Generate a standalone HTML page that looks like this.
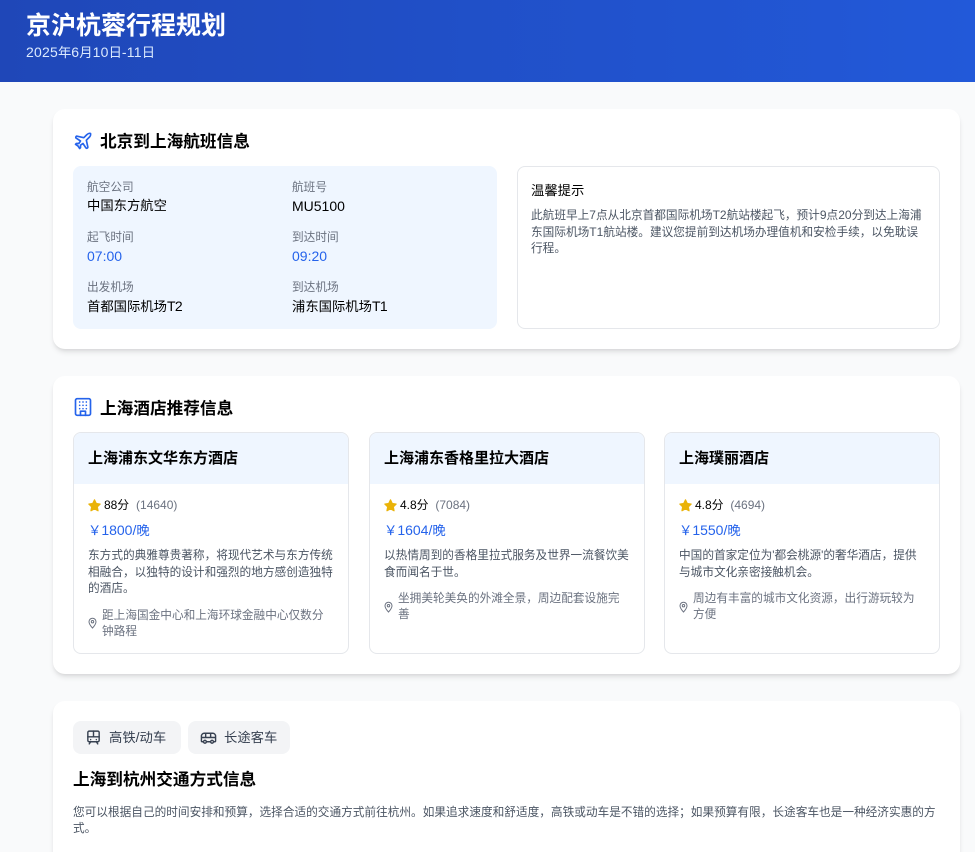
<!DOCTYPE html>
<html lang="zh-CN">
<head>
<meta charset="utf-8">
<title>京沪杭蓉行程规划</title>
<style>
*{box-sizing:border-box;margin:0;padding:0}
html,body{width:975px;height:852px;overflow:hidden}
body{position:relative;background:#f9fafb;font-family:"Liberation Sans","Noto Sans CJK SC",sans-serif;color:#000}
.a{position:absolute;white-space:nowrap}
.hd{position:absolute;left:0;top:0;width:975px;height:82px;background:linear-gradient(90deg,#1f47b8,#2259d9)}
.card{position:absolute;left:53px;width:907px;background:#fff;border-radius:12px;box-shadow:0 4px 6px -1px rgba(0,0,0,.1),0 2px 4px -2px rgba(0,0,0,.1)}
.t18{font-size:16.67px;font-weight:700;line-height:24px}
.lb{font-size:11.67px;line-height:16px;color:#6b7280}
.v{font-size:13.33px;line-height:20px}
.L{font-size:14px}
.S{font-size:12px}
.T{font-size:14px;letter-spacing:-.6px}
.blue{color:#2563eb}
.box{position:absolute;border:1px solid #e5e7eb;border-radius:8px;background:#fff}
.hc{position:absolute;top:432px;width:276px;height:222px;border:1px solid #e5e7eb;border-radius:8px;background:#fff;overflow:hidden}
.hc .h{position:absolute;left:0;top:0;width:100%;height:51px;background:#eff6ff}
.hc .n{position:absolute;left:14px;top:15px;font-size:15px;font-weight:700;line-height:21px;white-space:nowrap}
.hc .s{position:absolute;left:14px;top:64px;font-size:11.67px;line-height:16px;white-space:nowrap}
.hc .s svg{position:absolute;left:-1px;top:1px}
.hc .s b{font-weight:400;margin-left:16px}
.hc .s i{font-style:normal;color:#6b7280;margin-left:7px}
.hc .p{position:absolute;left:14px;top:87px;font-size:13.33px;line-height:20px;color:#2563eb;white-space:nowrap}
.hc .d{position:absolute;left:14px;top:115px;width:256px;font-size:11.67px;line-height:16.5px;color:#4b5563;white-space:nowrap}
.hc .l{position:absolute;left:28px;width:240px;font-size:11.67px;line-height:16px;color:#6b7280;white-space:nowrap}
.hc .pin{position:absolute;left:14px}
.tab{position:absolute;top:721px;height:33px;background:#f3f4f6;border-radius:8px;font-size:13.33px;line-height:33px;color:#374151}
</style>
</head>
<body>
<div class="hd"></div>
<div class="a" style="left:26px;top:8px;font-size:25px;font-weight:700;line-height:36px;color:#fff">京沪杭蓉行程规划</div>
<div class="a" style="left:26px;top:42px;font-size:13.33px;line-height:20px;color:#dbeafe"><span class="L" style="letter-spacing:.2px">2025</span>年<span class="L" style="letter-spacing:.2px">6</span>月<span class="L" style="letter-spacing:.2px">10</span>日<span class="L" style="letter-spacing:.2px">-11</span>日</div>

<div class="card" style="top:109px;height:240px"></div>
<svg class="a" style="left:73px;top:131px" width="20" height="20" viewBox="0 0 24 24" fill="none" stroke="#2563eb" stroke-width="2" stroke-linejoin="round" stroke-linecap="round"><path d="M17.800 19.200 16 11l3.500-3.500C21 6 21.500 4 21 3c-1-.5-3 0-4.500 1.500L13 8 4.800 6.200c-.5-.1-.9.1-1.100.500l-.3.500c-.2.500-.1 1 .3 1.300L9 12l-2 3H4l-1 1 3 2 2 3 1-1v-3l3-2 3.500 5.300c.3.400.8.500 1.300.300l.5-.2c.4-.3.600-.7.500-1.200z"/></svg>
<div class="a t18" style="left:100px;top:130px">北京到上海航班信息</div>

<div class="a" style="left:73px;top:166px;width:424px;height:163px;background:#eff6ff;border-radius:8px"></div>
<div class="a lb" style="left:87px;top:180px">航空公司</div>
<div class="a v" style="left:87px;top:196px">中国东方航空</div>
<div class="a lb" style="left:292px;top:180px">航班号</div>
<div class="a v" style="left:292px;top:196px"><span class="L">MU5100</span></div>
<div class="a lb" style="left:87px;top:230px">起飞时间</div>
<div class="a v blue" style="left:87px;top:246px"><span class="L">07:00</span></div>
<div class="a lb" style="left:292px;top:230px">到达时间</div>
<div class="a v blue" style="left:292px;top:246px"><span class="L">09:20</span></div>
<div class="a lb" style="left:87px;top:280px">出发机场</div>
<div class="a v" style="left:87px;top:296px">首都国际机场<span class="T">T2</span></div>
<div class="a lb" style="left:292px;top:280px">到达机场</div>
<div class="a v" style="left:292px;top:296px">浦东国际机场<span class="T">T1</span></div>

<div class="box" style="left:517px;top:166px;width:423px;height:163px"></div>
<div class="a" style="left:531px;top:181px;font-size:13.33px;line-height:20px">温馨提示</div>
<div class="a" style="left:531px;top:207px;width:400px;font-size:11.67px;line-height:16px;color:#4b5563">此航班早上<span class="S">7</span>点从北京首都国际机场<span class="S">T2</span>航站楼起飞，预计<span class="S">9</span>点<span class="S">20</span>分到达上海浦<br>东国际机场<span class="S">T1</span>航站楼。建议您提前到达机场办理值机和安检手续，以免耽误<br>行程。</div>

<div class="card" style="top:376px;height:298px"></div>
<svg class="a" style="left:73px;top:397px" width="20" height="20" viewBox="0 0 24 24" fill="none" stroke="#2563eb" stroke-width="2" stroke-linejoin="round" stroke-linecap="round"><rect x="3" y="2" width="18" height="20" rx="2"/><path d="M9 22v-5h6v5M8 6h.01M12 6h.01M16 6h.01M8 10h.01M12 10h.01M16 10h.01M8 14h.01M12 14h.01M16 14h.01"/></svg>
<div class="a t18" style="left:100px;top:397px">上海酒店推荐信息</div>

<div class="hc" style="left:73px">
  <div class="h"></div><div class="n">上海浦东文华东方酒店</div>
  <div class="s"><svg width="15" height="15" viewBox="0 0 24 24" fill="#eab308" stroke="#eab308" stroke-width="2" stroke-linejoin="round"><path d="M12 3l2.800 5.800 6.200.9-4.500 4.400 1.100 6.300L12 17.400 6.400 20.400l1.100-6.300L3 9.700l6.200-.9z"/></svg><b><span class="S">88</span>分</b><i><span class="S">(14640)</span></i></div>
  <div class="p">￥<span class="L">1800/</span>晚</div>
  <div class="d">东方式的典雅尊贵著称，将现代艺术与东方传统<br>相融合，以独特的设计和强烈的地方感创造独特<br>的酒店。</div>
  <svg class="pin" style="top:184px" width="9" height="12" viewBox="0 0 9 12" fill="none" stroke="#6b7280"><path d="M4.500 11C2.500 8.800 1 7 1 4.700a3.500 3.500 0 0 1 7 0C8 7 6.500 8.800 4.500 11z"/><circle cx="4.500" cy="4.700" r="1.200"/></svg>
  <div class="l" style="top:175px">距上海国金中心和上海环球金融中心仅数分<br>钟路程</div>
</div>

<div class="hc" style="left:369px">
  <div class="h"></div><div class="n">上海浦东香格里拉大酒店</div>
  <div class="s"><svg width="15" height="15" viewBox="0 0 24 24" fill="#eab308" stroke="#eab308" stroke-width="2" stroke-linejoin="round"><path d="M12 3l2.800 5.800 6.200.9-4.500 4.400 1.100 6.300L12 17.400 6.400 20.400l1.100-6.300L3 9.700l6.200-.9z"/></svg><b><span class="S">4.8</span>分</b><i><span class="S">(7084)</span></i></div>
  <div class="p">￥<span class="L">1604/</span>晚</div>
  <div class="d">以热情周到的香格里拉式服务及世界一流餐饮美<br>食而闻名于世。</div>
  <svg class="pin" style="top:168px" width="9" height="12" viewBox="0 0 9 12" fill="none" stroke="#6b7280"><path d="M4.500 11C2.500 8.800 1 7 1 4.700a3.500 3.500 0 0 1 7 0C8 7 6.500 8.800 4.500 11z"/><circle cx="4.500" cy="4.700" r="1.200"/></svg>
  <div class="l" style="top:158px">坐拥美轮美奂的外滩全景，周边配套设施完<br>善</div>
</div>

<div class="hc" style="left:664px">
  <div class="h"></div><div class="n">上海璞丽酒店</div>
  <div class="s"><svg width="15" height="15" viewBox="0 0 24 24" fill="#eab308" stroke="#eab308" stroke-width="2" stroke-linejoin="round"><path d="M12 3l2.800 5.800 6.200.9-4.500 4.400 1.100 6.300L12 17.400 6.400 20.400l1.100-6.300L3 9.700l6.200-.9z"/></svg><b><span class="S">4.8</span>分</b><i><span class="S">(4694)</span></i></div>
  <div class="p">￥<span class="L">1550/</span>晚</div>
  <div class="d">中国的首家定位为'都会桃源'的奢华酒店，提供<br>与城市文化亲密接触机会。</div>
  <svg class="pin" style="top:168px" width="9" height="12" viewBox="0 0 9 12" fill="none" stroke="#6b7280"><path d="M4.500 11C2.500 8.800 1 7 1 4.700a3.500 3.500 0 0 1 7 0C8 7 6.500 8.800 4.500 11z"/><circle cx="4.500" cy="4.700" r="1.200"/></svg>
  <div class="l" style="top:158px">周边有丰富的城市文化资源，出行游玩较为<br>方便</div>
</div>

<div class="card" style="top:701px;height:170px"></div>
<div class="tab" style="left:73px;width:108px"><span class="a" style="left:36px;top:0">高铁<span class="L">/</span>动车</span>
<svg class="a" style="left:12px;top:8px" width="17" height="17" viewBox="0 0 24 24" fill="none" stroke="#374151" stroke-width="2" stroke-linejoin="round" stroke-linecap="round"><rect x="4" y="3" width="16" height="15" rx="2"/><path d="M4 11h16M12 3v8M8 15h.01M16 15h.01M8 18l-2 3M16 18l2 3"/></svg></div>
<div class="tab" style="left:188px;width:102px"><span class="a" style="left:36px;top:0">长途客车</span>
<svg class="a" style="left:12px;top:8px" width="17" height="17" viewBox="0 0 24 24" fill="none" stroke="#374151" stroke-width="2" stroke-linejoin="round" stroke-linecap="round"><path d="M8 6v6M15 6v6M2 12h20M4 18H3a1 1 0 0 1-1-1v-7a4 4 0 0 1 4-4h12a4 4 0 0 1 4 4v7a1 1 0 0 1-1 1h-1M9 18h6"/><circle cx="7" cy="18" r="2"/><circle cx="17" cy="18" r="2"/></svg></div>
<div class="a t18" style="left:73px;top:768px">上海到杭州交通方式信息</div>
<div class="a" style="left:73px;top:805px;width:880px;font-size:11.67px;line-height:16px;color:#4b5563">您可以根据自己的时间安排和预算，选择合适的交通方式前往杭州。如果追求速度和舒适度，高铁或动车是不错的选择；如果预算有限，长途客车也是一种经济实惠的方<br>式。</div>
</body>
</html>
